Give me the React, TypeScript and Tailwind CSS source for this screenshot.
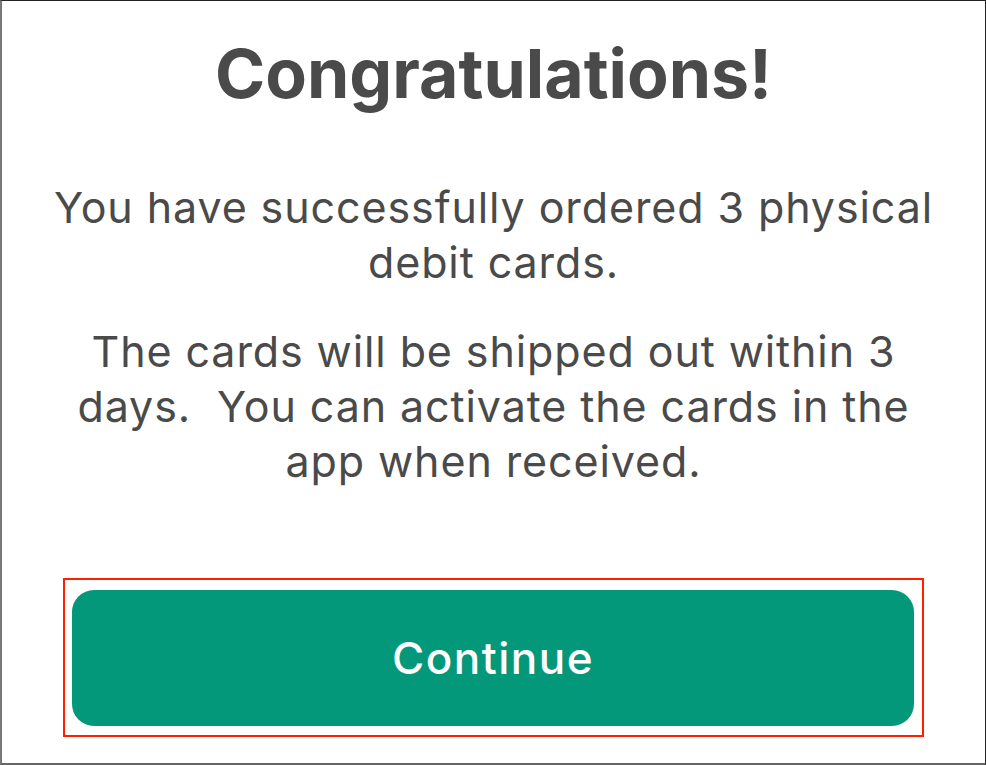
export default function App() {
  return (
    <div className="w-[986px] h-[765px] bg-white border-t border-t-[#222] border-l-2 border-l-[#777] border-b-2 border-b-[#666] border-r border-r-[#222] flex flex-col items-center text-[#4a4a4a] font-['Inter',sans-serif]">
      <h1 className="mt-[32px] text-[68px] leading-[80px] font-bold text-center">Congratulations!</h1>
      <p className="mt-[67px] w-[906px] text-[43px] leading-[55px] tracking-[0.9px] text-center">
        You have successfully ordered 3 physical debit cards.
      </p>
      <p className="mt-[34px] w-[880px] text-[43px] leading-[55px] tracking-[0.9px] text-center">
        The cards will be shipped out within 3 days.&nbsp; You can activate the cards in the app when received.
      </p>
      <div className="mt-auto mb-[26px] w-[861px] h-[159px] border-2 border-[#ff2000] pt-[10px] pb-[9px] pl-[7px] pr-[8px]">
        <button className="w-full h-full rounded-[22px] bg-[#03987a] text-white text-[44px] tracking-[1.5px] font-medium">
          Continue
        </button>
      </div>
    </div>
  );
}
